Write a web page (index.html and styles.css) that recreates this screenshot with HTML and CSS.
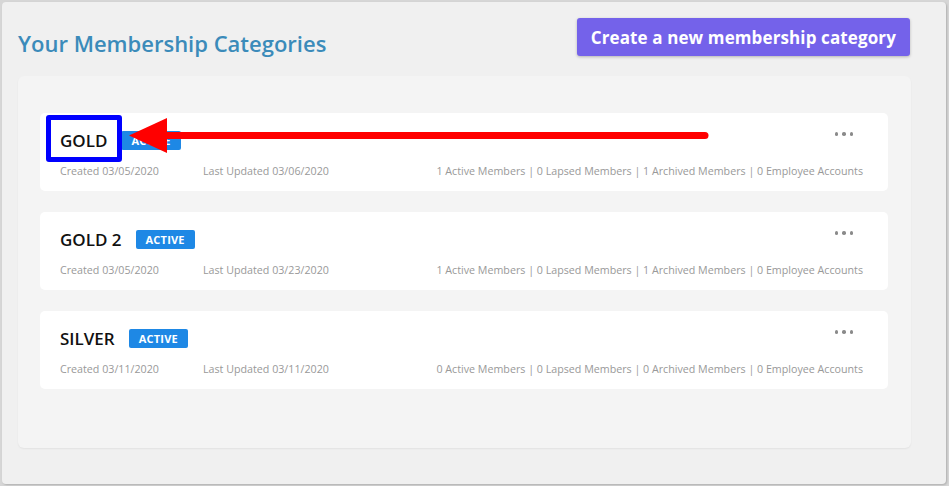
FILE: index.html
```html
<!DOCTYPE html>
<html lang="en">
<head>
<meta charset="utf-8">
<title>Your Membership Categories</title>
<link rel="stylesheet" href="styles.css">
</head>
<body>
<div class="panel">
  <div class="header">
    <h1 class="title">Your Membership Categories</h1>
    <button class="btn-create">Create a new membership category</button>
  </div>
  <div class="list">
    <div class="card">
      <div class="card-top">
        <span class="name">GOLD</span>
        <span class="badge">ACTIVE</span>
        <span class="dots"><i></i><i></i><i></i></span>
      </div>
      <div class="meta">
        <span class="created">Created 03/05/2020</span>
        <span class="updated">Last Updated 03/06/2020</span>
        <span class="stats">1 Active Members | 0 Lapsed Members | 1 Archived Members | 0 Employee Accounts</span>
      </div>
    </div>
    <div class="card">
      <div class="card-top">
        <span class="name">GOLD 2</span>
        <span class="badge">ACTIVE</span>
        <span class="dots"><i></i><i></i><i></i></span>
      </div>
      <div class="meta">
        <span class="created">Created 03/05/2020</span>
        <span class="updated">Last Updated 03/23/2020</span>
        <span class="stats">1 Active Members | 0 Lapsed Members | 1 Archived Members | 0 Employee Accounts</span>
      </div>
    </div>
    <div class="card">
      <div class="card-top">
        <span class="name">SILVER</span>
        <span class="badge">ACTIVE</span>
        <span class="dots"><i></i><i></i><i></i></span>
      </div>
      <div class="meta">
        <span class="created">Created 03/11/2020</span>
        <span class="updated">Last Updated 03/11/2020</span>
        <span class="stats">0 Active Members | 0 Lapsed Members | 0 Archived Members | 0 Employee Accounts</span>
      </div>
    </div>
  </div>
</div>
<div class="highlight-box"></div>
<svg class="arrow" width="949" height="486" viewBox="0 0 949 486" aria-hidden="true">
  <line x1="160" y1="135.5" x2="705" y2="135.5" stroke="#ff0000" stroke-width="7" stroke-linecap="round"/>
  <polygon points="129,135.5 167,118 167,153" fill="#ff0000"/>
</svg>
</body>
</html>
```

FILE: styles.css
```css
* { box-sizing: border-box; }
html, body { margin: 0; padding: 0; }
body {
  width: 949px;
  height: 486px;
  background: #d6d6d6;
  padding: 2px 3px 2px 2px;
  font-family: "Open Sans", "Noto Sans", sans-serif;
  position: relative;
  overflow: hidden;
}
.panel {
  height: 482px;
  background: #f0f0f0;
  border-radius: 4px;
  box-shadow: 1px 1px 2px rgba(0,0,0,0.18);
  padding: 16px 35px 0 16px;
  display: flex;
  flex-direction: column;
}
.header {
  display: flex;
  justify-content: space-between;
  align-items: flex-start;
  height: 38px;
  padding-right: 1px;
}
.title {
  margin: 11px 0 0 0;
  font-size: 22px;
  line-height: 29px;
  font-weight: 600;
  color: #3b8bba;
}
.btn-create {
  height: 38px;
  padding: 0 14px;
  border: none;
  border-radius: 3px;
  background: #7462ea;
  color: #fff;
  font-family: "Open Sans", "Noto Sans", sans-serif;
  font-size: 17px;
  font-weight: 700;
  letter-spacing: 0.12px;
  box-shadow: 0 1px 3px rgba(0,0,0,0.25);
}
.list {
  margin-top: 20px;
  height: 372px;
  background: #f4f4f4;
  border-radius: 6px;
  box-shadow: 0 1px 2px rgba(0,0,0,0.06);
  padding: 37px 23px 0 22px;
  display: flex;
  flex-direction: column;
  gap: 21px;
}
.card {
  height: 78px;
  background: #fff;
  border-radius: 5px;
  padding: 18px 25px 0 20px;
}
.card-top {
  display: flex;
  align-items: center;
  height: 19px;
}
.name {
  font-size: 17px;
  font-weight: 600;
  color: #111;
  line-height: 19px;
  margin-top: -1px;
}
.badge {
  margin-left: 14px;
  height: 19px;
  padding: 0 10px;
  background: #1e88e5;
  color: #fff;
  border-radius: 2px;
  font-size: 11px;
  font-weight: 700;
  line-height: 19px;
  letter-spacing: 0.2px;
}
.dots {
  margin-left: auto;
  margin-right: 10px;
  align-self: flex-start;
  margin-top: 1px;
  display: flex;
  gap: 4px;
}
.dots i {
  display: block;
  width: 3.5px;
  height: 3.5px;
  border-radius: 50%;
  background: #8a8a8a;
}
.meta {
  margin-top: 14px;
  display: flex;
  font-size: 10.7px;
  line-height: 15px;
  color: #999;
}
.created { width: 143px; }
.stats { margin-left: auto; }
.highlight-box {
  position: absolute;
  left: 46px;
  top: 115px;
  width: 76px;
  height: 47px;
  border: 5px solid #0000ff;
  border-radius: 3px;
}
.arrow {
  position: absolute;
  left: 0;
  top: 0;
}
```
